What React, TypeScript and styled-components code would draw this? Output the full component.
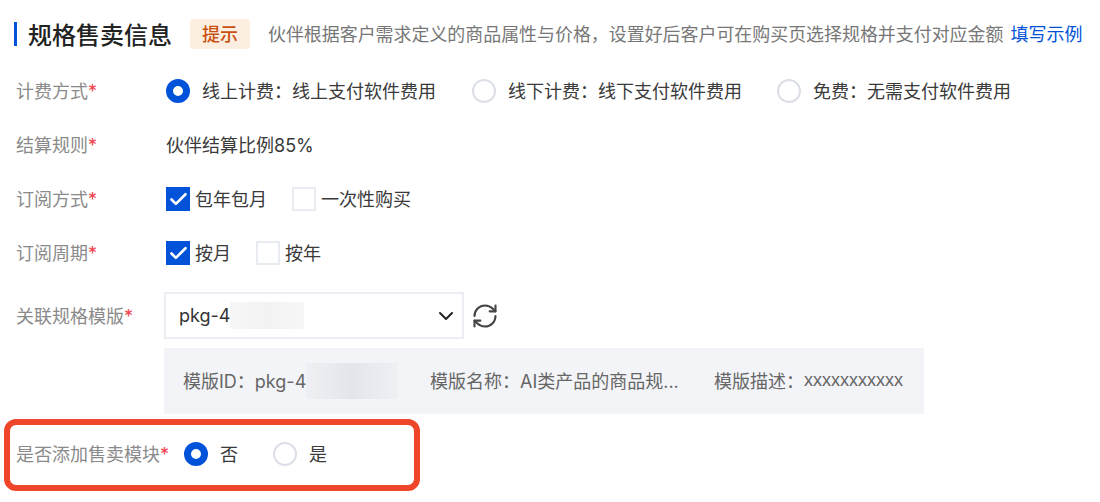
import React from "react";
import styled, { createGlobalStyle } from "styled-components";
import { ChevronDown, RefreshCw, Check } from "lucide-react";

const GlobalStyle = createGlobalStyle`
  body {
    margin: 0;
    background: #fff;
    font-family: "Inter", "Noto Sans CJK SC", sans-serif;
    font-size: 18px;
    color: #3a3a3a;
  }
`;

const Page = styled.div`
  width: 1100px;
  height: 502px;
  padding-top: 19px;
  box-sizing: border-box;
  overflow: hidden;
`;

const Header = styled.header`
  display: flex;
  align-items: center;
  height: 30px;
  padding-left: 14px;
  margin-bottom: 15px;
`;

const Title = styled.h2`
  margin: 0;
  box-sizing: border-box;
  border-left: 3px solid #0052d9;
  padding: 0 0 2px 11px;
  height: 24px;
  display: flex;
  align-items: center;
  font-size: 24px;
  font-weight: 500;
  color: #222;
`;

const Tag = styled.span`
  margin-left: 18px;
  box-sizing: border-box;
  width: 60px;
  height: 30px;
  padding-bottom: 2px;
  display: flex;
  align-items: center;
  justify-content: center;
  border-radius: 4px;
  background: #fdeee2;
  color: #c9500f;
  font-size: 18px;
  font-weight: 500;
`;

const Hint = styled.span`
  margin-left: 18px;
  padding-bottom: 2px;
  font-size: 17.95px;
  color: #777;
`;

const Link = styled.a`
  margin-left: 7px;
  padding-bottom: 2px;
  color: #0052d9;
`;

const Row = styled.div`
  display: flex;
  align-items: center;
  height: 54px;
  padding-left: 16px;
`;

const Label = styled.label`
  width: 150px;
  flex: none;
  padding-bottom: 2px;
  color: #8a8a8a;

  i {
    color: #f0414a;
    font-style: normal;
  }
`;

const ItemText = styled.span`
  padding-bottom: 2px;
`;

const RadioItem = styled.div<{ $width: number }>`
  display: flex;
  align-items: center;
  width: ${(p) => p.$width}px;
  flex: none;
`;

const RadioDot = styled.span<{ $on?: boolean }>`
  width: 24px;
  height: 24px;
  box-sizing: border-box;
  flex: none;
  border-radius: 50%;
  background: #fff;
  border: ${(p) => (p.$on ? "7px solid #0052d9" : "2px solid #dcdfe8")};
  margin-right: 12px;
`;

const CheckItem = styled.div<{ $width: number }>`
  display: flex;
  align-items: center;
  width: ${(p) => p.$width}px;
  flex: none;
`;

const CheckBox = styled.span<{ $on?: boolean }>`
  width: 24px;
  height: 24px;
  box-sizing: border-box;
  flex: none;
  display: flex;
  align-items: center;
  justify-content: center;
  margin-right: 5px;
  background: ${(p) => (p.$on ? "#0052d9" : "#fff")};
  border: ${(p) => (p.$on ? "none" : "2px solid #e9ebf3")};
  color: #fff;
`;

const TemplateRow = styled(Row)`
  height: 47px;
  margin-top: 12px;
`;

const TemplateLabel = styled(Label)`
  width: 148px;
`;

const Select = styled.div`
  width: 300px;
  height: 47px;
  box-sizing: border-box;
  flex: none;
  border: 2px solid #eceef5;
  display: flex;
  align-items: center;
  padding: 0 4px 0 13px;
  color: #333;
`;

const Masked = styled.span<{ $w: number; $h: number; $edge: string; $mid: string }>`
  display: inline-block;
  width: ${(p) => p.$w}px;
  height: ${(p) => p.$h}px;
  background: linear-gradient(90deg, ${(p) => p.$edge}, ${(p) => p.$mid} 50%, ${(p) => p.$edge});
  flex: none;
`;

const Arrow = styled(ChevronDown)`
  margin-left: auto;
  color: #222;
`;

const Refresh = styled(RefreshCw)`
  margin-left: 7px;
  color: #444;
`;

const Notice = styled.div`
  margin: 9px 0 0 164px;
  width: 760px;
  height: 66px;
  background: #f3f4f8;
  display: flex;
  align-items: center;
  padding-left: 19px;
  box-sizing: border-box;
  color: #666;
`;

const NoticeItem = styled.div<{ $width: number }>`
  display: flex;
  align-items: center;
  width: ${(p) => p.$width}px;
  flex: none;
  white-space: nowrap;
`;

const Filler = styled(ItemText)`
  font-family: "Liberation Sans", sans-serif;
`;

const Marked = styled.div`
  margin: 5px 0 0 4px;
  width: 416px;
  height: 72px;
  box-sizing: border-box;
  border: 6px solid #ef452a;
  border-radius: 12px;
  display: flex;
  align-items: center;
  padding: 0 0 3px 6px;
`;

const WideLabel = styled(Label)`
  width: 168px;
`;

const App: React.FC = () => (
  <Page>
    <GlobalStyle />
    <Header>
      <Title>规格售卖信息</Title>
      <Tag>提示</Tag>
      <Hint>伙伴根据客户需求定义的商品属性与价格，设置好后客户可在购买页选择规格并支付对应金额</Hint>
      <Link>填写示例</Link>
    </Header>
    <Row>
      <Label>计费方式<i>*</i></Label>
      <RadioItem $width={306}><RadioDot $on /><ItemText>线上计费：线上支付软件费用</ItemText></RadioItem>
      <RadioItem $width={305}><RadioDot /><ItemText>线下计费：线下支付软件费用</ItemText></RadioItem>
      <RadioItem $width={280}><RadioDot /><ItemText>免费：无需支付软件费用</ItemText></RadioItem>
    </Row>
    <Row>
      <Label>结算规则<i>*</i></Label>
      <ItemText>伙伴结算比例85%</ItemText>
    </Row>
    <Row>
      <Label>订阅方式<i>*</i></Label>
      <CheckItem $width={126}><CheckBox $on><Check size={21} strokeWidth={3} /></CheckBox><ItemText>包年包月</ItemText></CheckItem>
      <CheckItem $width={140}><CheckBox /><ItemText>一次性购买</ItemText></CheckItem>
    </Row>
    <Row>
      <Label>订阅周期<i>*</i></Label>
      <CheckItem $width={90}><CheckBox $on><Check size={21} strokeWidth={3} /></CheckBox><ItemText>按月</ItemText></CheckItem>
      <CheckItem $width={90}><CheckBox /><ItemText>按年</ItemText></CheckItem>
    </Row>
    <TemplateRow>
      <TemplateLabel>关联规格模版<i>*</i></TemplateLabel>
      <Select>
        pkg-4
        <Masked $w={74} $h={27} $edge="#f7f7f7" $mid="#f2f2f2" />
        <Arrow size={24} strokeWidth={2} />
      </Select>
      <Refresh size={28} strokeWidth={1.8} />
    </TemplateRow>
    <Notice>
      <NoticeItem $width={247}><ItemText>模版ID：pkg-4</ItemText><Masked $w={92} $h={36} $edge="#eff0f4" $mid="#e4e5ea" /></NoticeItem>
      <NoticeItem $width={284}><ItemText>模版名称：AI类产品的商品规...</ItemText></NoticeItem>
      <NoticeItem $width={210}><ItemText>模版描述：</ItemText><Filler>xxxxxxxxxxx</Filler></NoticeItem>
    </Notice>
    <Marked>
      <WideLabel>是否添加售卖模块<i>*</i></WideLabel>
      <RadioItem $width={89}><RadioDot $on /><ItemText>否</ItemText></RadioItem>
      <RadioItem $width={80}><RadioDot /><ItemText>是</ItemText></RadioItem>
    </Marked>
  </Page>
);

export default App;
